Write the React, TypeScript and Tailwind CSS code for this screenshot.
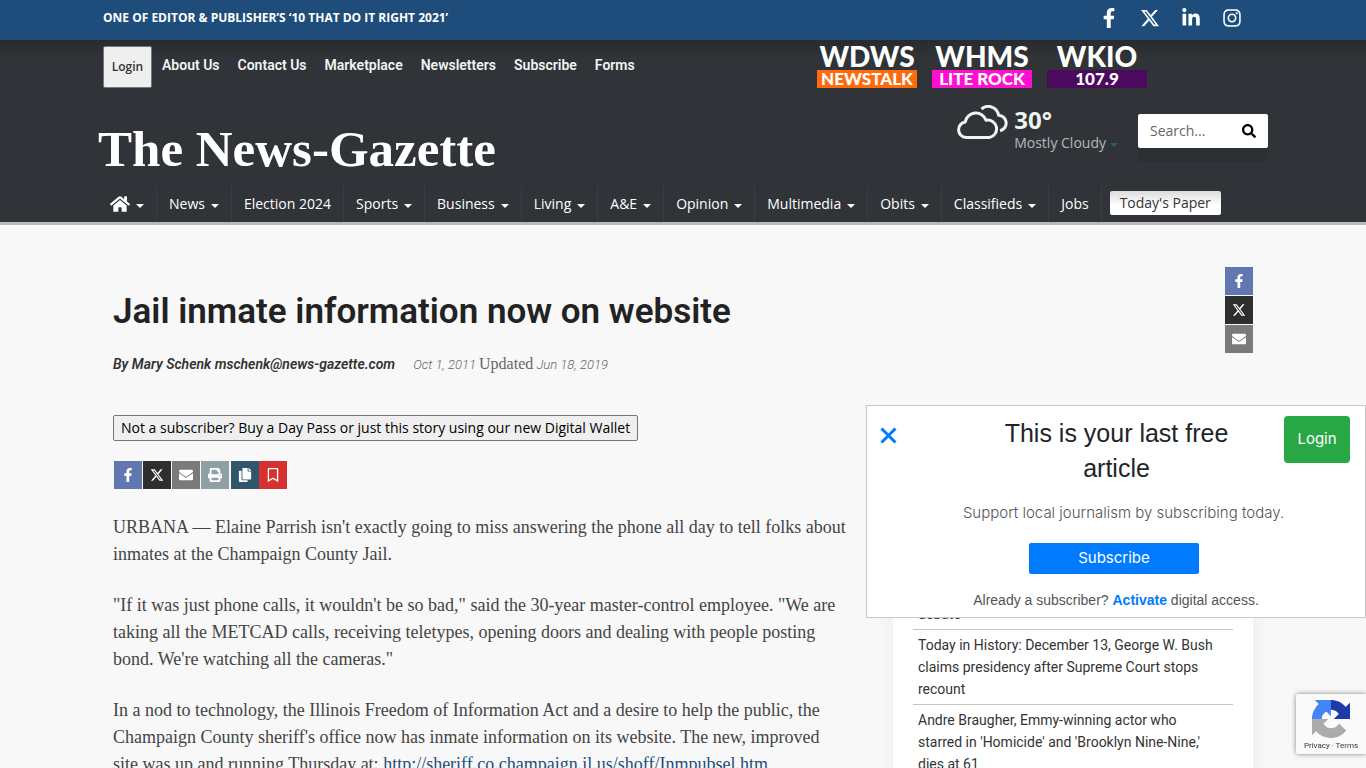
import type { ReactNode } from 'react';
import {
  FaCopy,
  FaEnvelope,
  FaFacebookF,
  FaHome,
  FaInstagram,
  FaLinkedinIn,
  FaPrint,
  FaRegBookmark,
  FaSearch,
} from 'react-icons/fa';
import { FaXTwitter } from 'react-icons/fa6';

const topLinks = ['About Us', 'Contact Us', 'Marketplace', 'Newsletters', 'Subscribe', 'Forms'];

const stations = [
  { name: 'WDWS', tag: 'NEWSTALK', color: 'bg-[#ff6a0d]' },
  { name: 'WHMS', tag: 'LITE ROCK', color: 'bg-[#ff0fd0]' },
  { name: 'WKIO', tag: '107.9', color: 'bg-[#4b0a5e]' },
];

const sections = [
  { label: 'News', menu: true },
  { label: 'Election 2024', menu: false },
  { label: 'Sports', menu: true },
  { label: 'Business', menu: true },
  { label: 'Living', menu: true },
  { label: 'A&E', menu: true },
  { label: 'Opinion', menu: true },
  { label: 'Multimedia', menu: true },
  { label: 'Obits', menu: true },
  { label: 'Classifieds', menu: true },
  { label: 'Jobs', menu: false },
];

const headlines = [
  'debate',
  'Today in History: December 13, George W. Bush claims presidency after Supreme Court stops recount',
  "Andre Braugher, Emmy-winning actor who starred in 'Homicide' and 'Brooklyn Nine-Nine,' dies at 61",
];

function Caret({ className = 'border-t-white' }: { className?: string }) {
  return <span className={`mt-1 inline-block border-x-4 border-t-4 border-x-transparent ${className}`} />;
}

function ShareButton({ label, color, children }: { label: string; color: string; children: ReactNode }) {
  return (
    <button
      type="button"
      aria-label={label}
      className={`flex size-7 items-center justify-center text-sm text-white ${color}`}
    >
      {children}
    </button>
  );
}

function CloudIcon() {
  return (
    <svg width="52" height="35" viewBox="0 0 52 35" fill="none" stroke="#f1f3f4" strokeWidth="3" strokeLinejoin="round">
      <path d="M9 32.5A7.8 7.8 0 0 1 8.2 17A10.8 10.8 0 0 1 29 15.2A8.7 8.7 0 0 1 32.5 32.5Z" />
      <path d="M24.5 4A10.4 10.4 0 0 1 41.6 10.2A7.9 7.9 0 0 1 43 25.8" />
    </svg>
  );
}

function RecaptchaLogo() {
  const arm =
    'M64 31.955c-.002-.46-.012-.919-.033-1.375V4.56l-7.192 7.192C50.889 4.548 41.969-.045 31.984-.045 21.593-.045 12.36 4.928 6.5 12.632L18.289 24.55c1.155-2.138 2.796-3.974 4.78-5.363 2.064-1.61 4.989-2.927 9.004-2.927.485 0 .859.057 1.134.163 4.975.393 9.287 3.138 11.826 7.123L36.69 31.889c10.57-.041 22.51-.066 27.31.066';
  return (
    <svg width="38" height="38" viewBox="0 0 64 64">
      <path d={arm} fill="#1c3aa9" />
      <path d={arm} fill="#4285f4" transform="rotate(-90 32 32)" />
      <path d={arm} fill="#ababab" transform="rotate(180 32 32)" />
    </svg>
  );
}

function TopBar() {
  return (
    <div className="bg-[#1e4d7c] text-white">
      <div className="mx-auto flex h-10 max-w-[1170px] items-center justify-between pr-[26px] pb-1 pl-[5px]">
        <p className="text-xs font-bold">ONE OF EDITOR &amp; PUBLISHER’S ‘10 THAT DO IT RIGHT 2021’</p>
        <div className="flex items-center gap-[21px] text-xl">
          <a href="#" aria-label="Facebook"><FaFacebookF /></a>
          <a href="#" aria-label="X"><FaXTwitter /></a>
          <a href="#" aria-label="LinkedIn"><FaLinkedinIn /></a>
          <a href="#" aria-label="Instagram"><FaInstagram /></a>
        </div>
      </div>
    </div>
  );
}

function Header() {
  return (
    <header className="border-b-3 border-[#b9b9b9] bg-linear-to-b from-[#272b2e] to-[#303438] to-10% text-white">
      <div className="mx-auto max-w-[1170px]">
        <div className="flex items-start justify-between pr-[121px] pl-[5px]">
          <div className="flex items-start gap-[10px] pt-[6px]">
            <button
              type="button"
              className="h-[42px] w-[49px] rounded-xs border border-[#767676] bg-[#efefef] text-xs font-semibold text-[#333]"
            >
              Login
            </button>
            <nav className="flex gap-[18px] pt-2 font-['Roboto'] text-sm leading-[22px] font-semibold text-[#f1f3f4]">
              {topLinks.map((link) => (
                <a key={link} href="#">{link}</a>
              ))}
            </nav>
          </div>
          <div className="flex gap-[15px] pt-[2px] text-center font-['Lato'] font-black">
            {stations.map((station) => (
              <a key={station.name} href="#" className="w-[100px]">
                <span className="block text-[28px] leading-7">{station.name}</span>
                <span className={`block text-[17px] leading-[18px] ${station.color}`}>{station.tag}</span>
              </a>
            ))}
          </div>
        </div>

        <div className="flex h-[98px] items-start justify-between">
          <a href="#" className="pt-9 font-['Liberation_Serif'] text-[51px] leading-[50px] font-bold">
            The News-Gazette
          </a>
          <div className="flex items-start gap-5 pt-[17px]">
            <a href="#" className="flex gap-[5px]">
              <CloudIcon />
              <span>
                <span className="block text-2xl leading-[30px] font-bold text-[#f1f3f4]">30°</span>
                <span className="flex items-center gap-1 text-sm leading-4 text-[#b4b8ba]">
                  Mostly Cloudy <Caret className="border-t-[#1e5d85]" />
                </span>
              </span>
            </a>
            <form className="mt-[9px] flex h-[34px] w-[130px] items-center rounded-xs bg-white px-3 text-black shadow-[0_14px_0_#2b3034]">
              <input
                aria-label="Search"
                placeholder="Search..."
                className="w-full min-w-0 text-sm placeholder:text-[#666]"
              />
              <button type="button" aria-label="Submit search"><FaSearch className="text-sm" /></button>
            </form>
          </div>
        </div>

        <nav className="flex h-9 items-stretch text-sm">
          <a href="#" aria-label="Home" className="flex items-center gap-[6px] border-r border-[#3b3f43] px-3">
            <FaHome className="text-xl" /> <Caret />
          </a>
          {sections.map((section) => (
            <a
              key={section.label}
              href="#"
              className="flex items-center gap-[6px] border-r border-[#3b3f43] px-3 whitespace-nowrap"
            >
              {section.label}
              {section.menu && <Caret />}
            </a>
          ))}
          <a
            href="#"
            className="mt-[5px] ml-2 h-6 rounded-xs bg-linear-to-b from-[#dcdcdc] to-white to-60% px-[10px] leading-6 whitespace-nowrap text-[#333]"
          >
            Today's Paper
          </a>
        </nav>
      </div>
    </header>
  );
}

function Article() {
  return (
    <article>
      <button
        type="button"
        className="block h-[26px] rounded-xs border border-[#767676] bg-[#efefef] px-[7px] text-sm text-black"
      >
        Not a subscriber? Buy a Day Pass or just this story using our new Digital Wallet
      </button>
      <div className="mt-5 flex gap-px pl-px">
        <ShareButton label="Facebook" color="bg-[#6078af]"><FaFacebookF /></ShareButton>
        <ShareButton label="X" color="bg-[#2e2e2e]"><FaXTwitter /></ShareButton>
        <ShareButton label="Email" color="bg-[#7a7a7a]"><FaEnvelope /></ShareButton>
        <ShareButton label="Print" color="bg-[#8f9fa3]"><FaPrint /></ShareButton>
        <div className="ml-px flex">
          <ShareButton label="Copy article link" color="bg-[#2f566b]"><FaCopy /></ShareButton>
          <ShareButton label="Save" color="bg-[#d63031]"><FaRegBookmark /></ShareButton>
        </div>
      </div>
      <div className="mt-[25px] space-y-6 font-['Liberation_Serif'] text-lg leading-[27px] text-[#444]">
        <p>
          URBANA — Elaine Parrish isn't exactly going to miss answering the phone all day to tell folks about
          inmates at the Champaign County Jail.
        </p>
        <p>
          "If it was just phone calls, it wouldn't be so bad," said the 30-year master-control employee. "We are
          taking all the METCAD calls, receiving teletypes, opening doors and dealing with people posting
          bond. We're watching all the cameras."
        </p>
        <p>
          In a nod to technology, the Illinois Freedom of Information Act and a desire to help the public, the
          Champaign County sheriff's office now has inmate information on its website. The new, improved
          <br />
          site was up and running Thursday at:{' '}
          <a href="#" className="text-[#1e4d7c] underline">http://sheriff.co.champaign.il.us/shoff/Inmpubsel.htm</a>
        </p>
      </div>
    </article>
  );
}

function SubscribePopup() {
  return (
    <aside className="fixed top-[405px] right-0 w-[500px] border border-[#c8c8c8] bg-white pb-[7px] text-center">
      <div className="flex items-start justify-between pt-[10px] pr-[15px] pl-[13px]">
        <button type="button" aria-label="Close" className="pt-[11px] text-[#007bff]">
          <svg width="17" height="17" viewBox="0 0 17 17" stroke="currentColor" strokeWidth="3">
            <path d="M1.5 1.5l14 14M15.5 1.5l-14 14" />
          </svg>
        </button>
        <h2 className="w-[300px] pl-[52px] font-['Liberation_Sans'] text-[25px] leading-[35px] text-[#212529]">
          This is your last free article
        </h2>
        <button type="button" className="h-[47px] w-[66px] rounded-sm bg-[#28a745] font-['Inter'] text-[15px] text-white">
          Login
        </button>
      </div>
      <p className="mt-[17px] pl-[15px] font-['Inter'] text-[15px] leading-5 font-light text-[#555]">
        Support local journalism by subscribing today.
      </p>
      <button
        type="button"
        className="mt-5 mr-1 h-[31px] w-[170px] rounded-xs bg-[#007bff] font-['Inter'] text-[15px] text-white"
      >
        Subscribe
      </button>
      <p className="mt-4 font-['Liberation_Sans'] text-sm leading-5 text-[#555]">
        Already a subscriber? <a href="#" className="font-bold text-[#007bff]">Activate</a> digital access.
      </p>
    </aside>
  );
}

export default function App() {
  return (
    <div className="min-h-screen bg-[#f8f8f8] font-['Open_Sans',sans-serif]">
      <TopBar />
      <Header />
      <main className="mx-auto max-w-[1170px] px-[15px] pt-[42px]">
        <div className="flex items-start justify-between">
          <div className="pt-3">
            <h1 className="font-['Roboto'] text-[35px] leading-[66px] font-semibold text-[#222]">
              Jail inmate information now on website
            </h1>
            <div className="mt-[9px] flex items-baseline gap-[18px] font-['Roboto'] text-sm leading-5 text-[#333] italic">
              <span className="font-semibold">By Mary Schenk mschenk@news-gazette.com</span>
              <span className="text-[13px] font-light text-[#666]">
                Oct 1, 2011 <span className="font-['Liberation_Serif'] text-base leading-5 font-normal not-italic">Updated</span>{' '}
                Jun 18, 2019
              </span>
            </div>
          </div>
          <div className="flex flex-col gap-px">
            <ShareButton label="Facebook" color="bg-[#6078af]"><FaFacebookF /></ShareButton>
            <ShareButton label="X" color="bg-[#2e2e2e]"><FaXTwitter /></ShareButton>
            <ShareButton label="Email" color="bg-[#7a7a7a]"><FaEnvelope /></ShareButton>
          </div>
        </div>
        <div className="mt-10 grid grid-cols-[minmax(0,1fr)_360px] gap-10">
          <Article />
          <aside className="mt-[167px] bg-white p-5 pt-[17px] shadow-[0_0_20px_rgba(0,0,0,0.05)]">
            {headlines.map((headline) => (
              <a
                key={headline}
                href="#"
                className="block border-b border-[#c4c4c4] py-1 pr-3 pl-[5px] font-['Roboto'] text-sm leading-[22px] text-[#333]"
              >
                {headline}
              </a>
            ))}
          </aside>
        </div>
      </main>
      <SubscribePopup />
      <div className="fixed right-0 bottom-[14px] flex h-[60px] w-[70px] flex-col items-center rounded-l-xs bg-[#fafafa] pt-[6px] shadow-[0_0_5px_gray]">
        <RecaptchaLogo />
        <p className="mt-[3px] font-['Roboto'] text-[8px] leading-[10px] text-[#333]">Privacy · Terms</p>
      </div>
    </div>
  );
}
